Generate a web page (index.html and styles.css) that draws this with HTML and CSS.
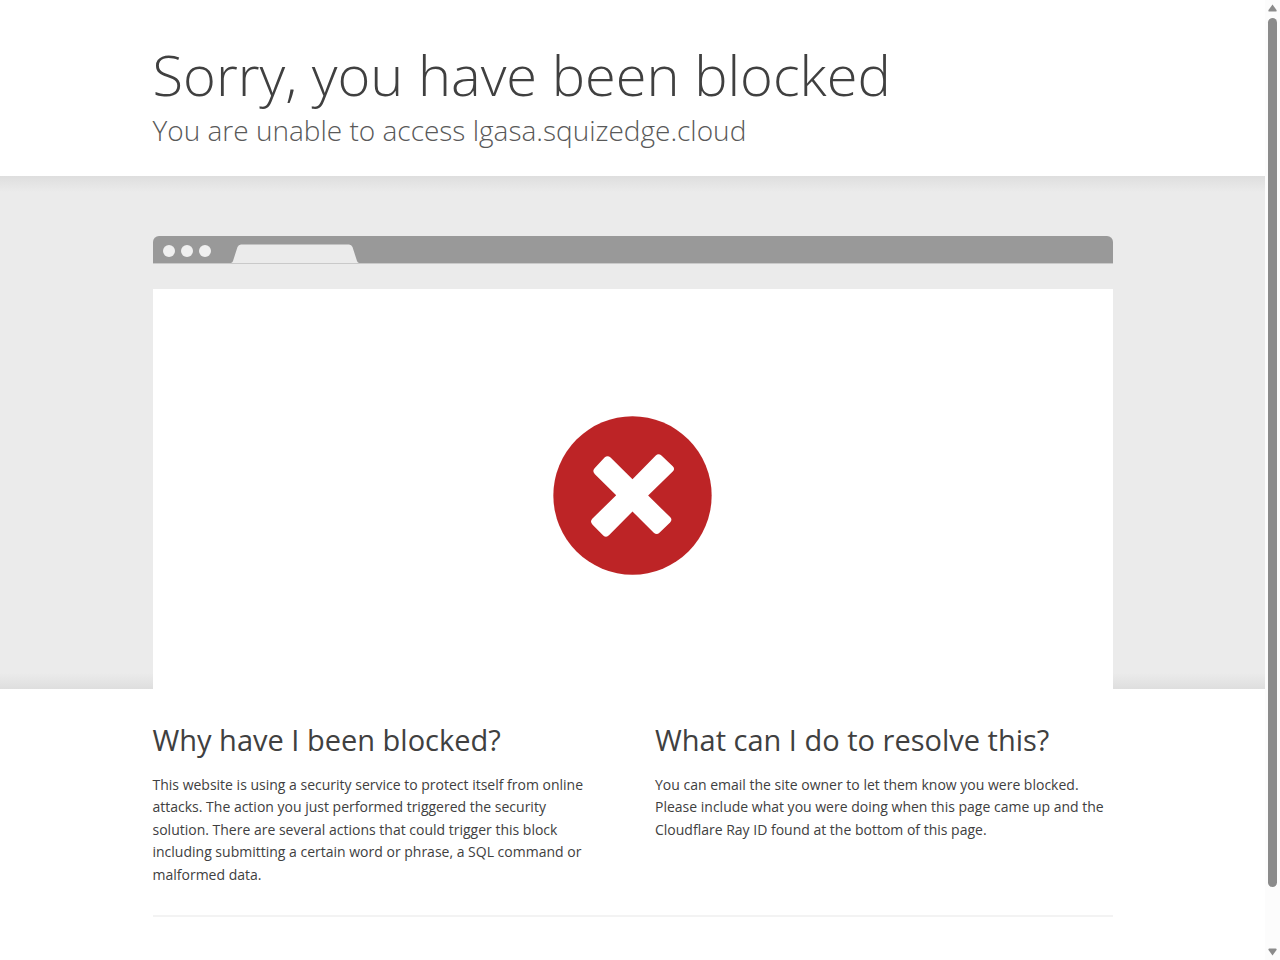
FILE: index.html
```html
<!DOCTYPE html>
<html lang="en">

<head>
    <meta charset="UTF-8">
    <meta name="viewport" content="width=device-width, initial-scale=1.0">
    <title>Attention Required! | Cloudflare</title>
    <link rel="stylesheet" href="styles.css">
</head>

<body>
    <div class="page">
        <header class="wrapper header">
            <h1>Sorry, you have been blocked</h1>
            <p class="subheadline">You are unable to access lgasa.squizedge.cloud</p>
        </header>

        <section class="highlight">
            <div class="wrapper">
                <div class="browser">
                    <div class="browser-bar">
                        <span class="dot"></span>
                        <span class="dot"></span>
                        <span class="dot"></span>
                        <svg class="tab" width="128" height="19" viewBox="0 0 128 19" aria-hidden="true">
                            <path d="M0 19 Q1.500 18.500 2 17 L6.500 3 Q7.500 0.500 10 0.500 H118 Q120.500 0.500 121.500 3 L126 17 Q126.500 18.500 128 19 Z" fill="#ebebeb" />
                        </svg>
                    </div>
                    <div class="browser-toolbar"></div>
                    <div class="browser-body">
                        <svg width="159" height="159" viewBox="37 32 478 478" role="img" aria-label="Blocked">
                            <circle cx="276" cy="271" r="238" fill="#bd2426" />
                            <path d="M192 157 Q201 149 210 157 L276 222 L346 151 Q354 143 363 151 L397 183 Q405 191 397 199 L323 271 L389 336 Q397 344 389 352 L357 383 Q349 391 340 383 L276 319 L206 390 Q197 399 188 391 L156 359 Q147 350 155 341 L227 270 L163 207 Q154 198 162 189 Z" fill="#fff" />
                        </svg>
                    </div>
                </div>
            </div>
        </section>

        <main class="wrapper">
            <div class="columns">
                <section>
                    <h2>Why have I been blocked?</h2>
                    <p>This website is using a security service to protect itself from online attacks. The action you just performed triggered the security solution. There are several actions that could trigger this block including submitting a certain word or phrase, a SQL command or malformed data.</p>
                </section>
                <section>
                    <h2>What can I do to resolve this?</h2>
                    <p>You can email the site owner to let them know you were blocked. Please include what you were doing when this page came up and the Cloudflare Ray ID found at the bottom of this page.</p>
                </section>
            </div>
        </main>
    </div>

    <div class="scrollbar" aria-hidden="true">
        <svg width="9" height="8" viewBox="0 0 9 8">
            <path d="M4.500 0.500 L8.500 6 Q9 7.500 7.500 7.500 H1.500 Q0 7.500 0.500 6 Z" fill="#8b8b8b" />
        </svg>
        <div class="track">
            <div class="thumb"></div>
        </div>
        <svg width="9" height="8" viewBox="0 0 9 8">
            <path d="M4.500 7.500 L8.500 2 Q9 0.500 7.500 0.500 H1.500 Q0 0.500 0.500 2 Z" fill="#8b8b8b" />
        </svg>
    </div>
</body>

</html>
```
FILE: styles.css
```css
* {
    box-sizing: border-box;
}

body {
    display: flex;
    height: 100vh;
    margin: 0;
    font-family: "Segoe UI", "Open Sans", "Noto Sans", sans-serif;
    font-size: 14px;
    line-height: 1.6;
    color: #404040;
    background-color: #fff;
}

h1,
h2,
p {
    margin: 0;
}

.page {
    flex: 1;
    min-width: 0;
    overflow-y: auto;
    scrollbar-width: none;
}

.wrapper {
    max-width: 960px;
    margin: 0 auto;
}

/* Headline */
.header {
    padding: 36px 0 28px;
}

h1 {
    font-size: 56px;
    font-weight: 300;
    line-height: 76px;
}

.subheadline {
    font-size: 28px;
    font-weight: 300;
    line-height: 36px;
    color: #595959;
}

/* Grey band with the browser window */
.highlight {
    padding-top: 60px;
    background-color: #ebebeb;
    background-image: linear-gradient(to bottom, #dedede, #ebebeb 16px, #ebebeb calc(100% - 16px), #dedede);
}

.browser-bar {
    display: flex;
    align-items: center;
    gap: 6px;
    height: 28px;
    padding: 2px 0 0 10px;
    border-bottom: 1px solid #c9c9c9;
    border-radius: 6px 6px 0 0;
    background-color: #999;
}

.dot {
    width: 12px;
    height: 12px;
    border-radius: 50%;
    background-color: #f0f0f0;
}

.tab {
    align-self: flex-end;
    margin-left: 14px;
}

.browser-toolbar {
    height: 25px;
    background-color: #ebebeb;
}

.browser-body {
    display: flex;
    justify-content: center;
    padding: 127px 0 114px;
    background-color: #fff;
}

/* Explanation */
.columns {
    display: grid;
    grid-template-columns: 1fr 1fr;
    gap: 45px;
    padding: 31px 0 29px;
    border-bottom: 2px solid #f3f3f3;
}

.columns section:first-child {
    padding-right: 14px;
}

h2 {
    margin-bottom: 14px;
    font-size: 29px;
    font-weight: 400;
    line-height: 40px;
}

/* Scrollbar */
.scrollbar {
    display: flex;
    flex-direction: column;
    align-items: center;
    gap: 6px;
    width: 15px;
    padding: 4px 0;
    background-color: #fcfcfc;
}

.track {
    flex: 1;
}

.thumb {
    width: 9px;
    height: 94%;
    border-radius: 5px;
    background-color: #8b8b8b;
}
```
